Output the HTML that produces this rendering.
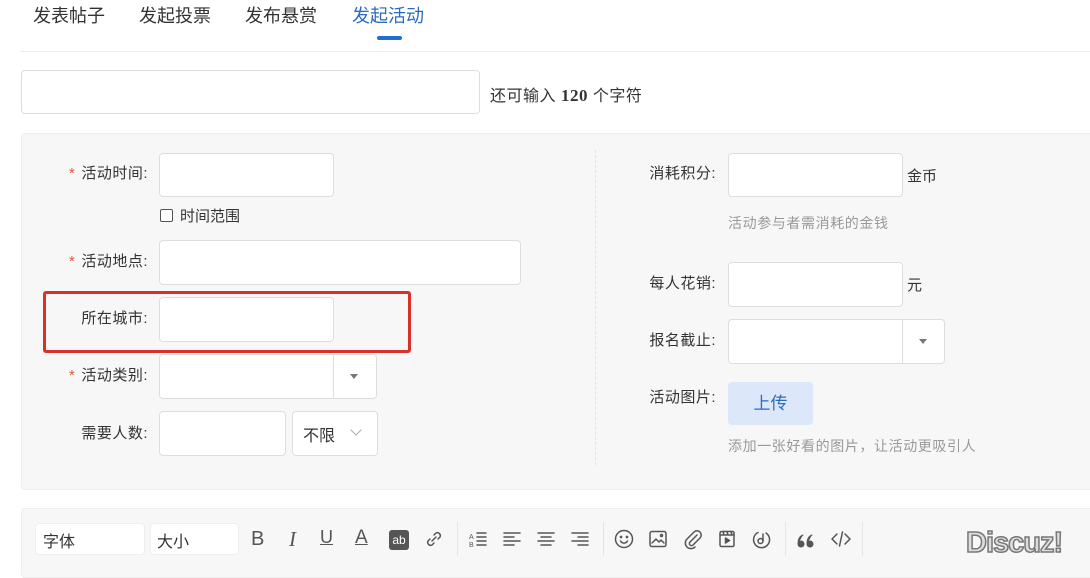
<!DOCTYPE html><html><head><meta charset="utf-8"><style>
*{box-sizing:border-box;margin:0;padding:0}
body{width:1090px;height:572px;overflow:hidden;background:#fff;font-family:"Liberation Sans","Noto Sans CJK SC",sans-serif;color:#333;position:relative}
.a{position:absolute}
.tab{font-size:18px;top:2px;color:#333}
.inp{position:absolute;background:#fff;border:1px solid #ddd;border-radius:4px}
.lb{position:absolute;font-size:15px;color:#333;text-align:right;width:140px;letter-spacing:0.5px}
.lb i{color:#e4573f;font-style:normal;margin-right:6px}
.hint{position:absolute;font-size:14px;color:#999;letter-spacing:0.6px}
svg.i{position:absolute;top:528px;width:22px;height:22px;fill:none;stroke:#555;stroke-width:1.5;stroke-linecap:round;stroke-linejoin:round}
.sep{position:absolute;top:522px;width:1px;height:34px;background:#e5e5e5}
</style></head><body>
<div class="a tab" style="left:33px">发表帖子</div>
<div class="a tab" style="left:139px">发起投票</div>
<div class="a tab" style="left:245px">发布悬赏</div>
<div class="a tab" style="left:352px;color:#2a6bbf">发起活动</div>
<div class="a" style="left:377px;top:36px;width:25px;height:4px;border-radius:2px;background:#1f6fd1"></div>
<div class="a" style="left:20px;top:51px;width:1070px;height:1px;background:#eee"></div>
<div class="inp" style="left:21px;top:70px;width:459px;height:44px"></div>
<div class="a" style="left:490px;top:82px;font-size:16px;letter-spacing:0.5px">还可输入 <b style="font-family:'Liberation Serif';font-size:17px">120</b> 个字符</div>
<div class="a" style="left:21px;top:133px;width:1075px;height:357px;background:#f7f7f7;border:1px solid #eee;border-radius:4px"></div>
<div class="a" style="left:595px;top:150px;height:315px;border-left:1px dashed #e3e3e3"></div>
<div class="lb" style="left:8px;top:162px"><i>*</i>活动时间:</div>
<div class="inp" style="left:159px;top:153px;width:175px;height:44px"></div>
<div class="a" style="left:160px;top:209px;width:13px;height:13px;border:1px solid #555;border-radius:2px;background:#fff"></div>
<div class="a" style="left:180px;top:205px;font-size:15px">时间范围</div>
<div class="lb" style="left:8px;top:250px"><i>*</i>活动地点:</div>
<div class="inp" style="left:159px;top:240px;width:362px;height:45px"></div>
<div class="lb" style="left:8px;top:307px">所在城市:</div>
<div class="inp" style="left:159px;top:297px;width:175px;height:45px"></div>
<div class="a" style="left:43px;top:291px;width:368px;height:62px;border:3px solid #d9302a;border-radius:3px"></div>
<div class="lb" style="left:8px;top:364px"><i>*</i>活动类别:</div>
<div class="inp" style="left:159px;top:354px;width:218px;height:45px"></div>
<div class="a" style="left:333px;top:355px;width:1px;height:43px;background:#ddd"></div>
<div class="a" style="left:350px;top:374px;border:4px solid transparent;border-top:5px solid #777"></div>
<div class="lb" style="left:8px;top:422px">需要人数:</div>
<div class="inp" style="left:159px;top:411px;width:127px;height:45px"></div>
<div class="inp" style="left:292px;top:411px;width:86px;height:45px"></div>
<div class="a" style="left:303px;top:422px;font-size:16px">不限</div>
<div class="a" style="left:352px;top:426px;width:8px;height:8px;border-right:1px solid #aaa;border-bottom:1px solid #aaa;transform:rotate(45deg)"></div>
<div class="lb" style="left:576px;top:162px">消耗积分:</div>
<div class="inp" style="left:728px;top:153px;width:175px;height:44px"></div>
<div class="a" style="left:907px;top:165px;font-size:15px">金币</div>
<div class="hint" style="left:728px;top:213px">活动参与者需消耗的金钱</div>
<div class="lb" style="left:576px;top:272px">每人花销:</div>
<div class="inp" style="left:728px;top:262px;width:175px;height:45px"></div>
<div class="a" style="left:907px;top:274px;font-size:15px">元</div>
<div class="lb" style="left:576px;top:329px">报名截止:</div>
<div class="inp" style="left:728px;top:319px;width:217px;height:45px"></div>
<div class="a" style="left:902px;top:320px;width:1px;height:43px;background:#ddd"></div>
<div class="a" style="left:919px;top:339px;border:4px solid transparent;border-top:5px solid #777"></div>
<div class="lb" style="left:576px;top:386px">活动图片:</div>
<div class="a" style="left:728px;top:382px;width:85px;height:43px;background:#dce8fa;border-radius:4px;color:#2a6bbf;font-size:17px;text-align:center;line-height:43px">上传</div>
<div class="hint" style="left:728px;top:436px">添加一张好看的图片，让活动更吸引人</div>
<div class="a" style="left:21px;top:508px;width:1075px;height:70px;background:#f7f7f7;border:1px solid #eee;border-radius:4px"></div>
<div class="inp" style="left:35px;top:523px;width:110px;height:32px;border-color:#eee;font-size:16px;padding:4px 7px">字体</div>
<div class="inp" style="left:150px;top:523px;width:89px;height:32px;border-color:#eee;font-size:16px;padding:4px 6px">大小</div>
<div class="a" style="left:251px;top:528px;font-size:20px;color:#555">B</div>
<div class="a" style="left:289px;top:527px;font-size:21px;color:#555;font-style:italic;font-family:'Liberation Serif'">I</div>
<div class="a" style="left:320px;top:527px;font-size:18px;color:#555;text-decoration:underline">U</div>
<div class="a" style="left:355px;top:527px;font-size:19px;color:#555;text-decoration:underline">A</div>
<div class="a" style="left:389px;top:530px;width:20px;height:20px;background:#555;border-radius:3px;color:#fff;font-size:12px;text-align:center;line-height:20px">ab</div>
<svg class="i" style="left:423px" viewBox="0 0 22 22"><path d="M9 13l4-4M7 11l-2 2a3 3 0 004 4l2-2M15 11l2-2a3 3 0 00-4-4l-2 2"/></svg>
<div class="sep" style="left:457px"></div>
<svg class="i" style="left:467px" viewBox="0 0 22 22"><path d="M10 5h9M10 9h9M10 13h9M10 17h9"/><text x="2" y="11" font-size="7" fill="#555" stroke="none">A</text><text x="2" y="19" font-size="7" fill="#555" stroke="none">B</text></svg>
<svg class="i" style="left:501px" viewBox="0 0 22 22"><path d="M3 5h16M3 9h10M3 13h16M3 17h10"/></svg>
<svg class="i" style="left:535px" viewBox="0 0 22 22"><path d="M3 5h16M6 9h10M3 13h16M6 17h10"/></svg>
<svg class="i" style="left:569px" viewBox="0 0 22 22"><path d="M3 5h16M9 9h10M3 13h16M9 17h10"/></svg>
<div class="sep" style="left:603px"></div>
<svg class="i" style="left:613px" viewBox="0 0 22 22"><circle cx="11" cy="11" r="8.5"/><path d="M7.5 13a4 4 0 007 0"/><circle cx="8" cy="9" r=".6"/><circle cx="14" cy="9" r=".6"/></svg>
<svg class="i" style="left:647px" viewBox="0 0 22 22"><rect x="3" y="3.5" width="16" height="15" rx="2"/><path d="M5 15l4-4 3 3 2-2 3 3"/><circle cx="14.5" cy="7.5" r="1"/></svg>
<svg class="i" style="left:682px" viewBox="0 0 22 22"><path d="M15 7l-7 7a2 2 0 003 3l7-7a4 4 0 00-6-6L5 11a5.5 5.5 0 008 8"/></svg>
<svg class="i" style="left:716px" viewBox="0 0 22 22"><rect x="4" y="3.5" width="14" height="15" rx="1.5"/><path d="M4 7h14M7 3.5l1 3.5M11 3.5l1 3.5M15 3.5l1 3.5"/><path d="M9.5 10v5l4-2.5z" fill="#555"/></svg>
<svg class="i" style="left:750px" viewBox="0 0 22 22"><path d="M8 4.5A8 8 0 1016 5"/><path d="M13 6v7"/><circle cx="10.5" cy="13" r="2.5"/></svg>
<div class="sep" style="left:785px"></div>
<svg class="i" style="left:795px" viewBox="0 0 22 22"><path d="M3 16a3 3 0 106 0 3 3 0 00-6 0c0-5 2-8 5-9M12 16a3 3 0 106 0 3 3 0 00-6 0c0-5 2-8 5-9" fill="#555" stroke-width="1"/></svg>
<svg class="i" style="left:830px" viewBox="0 0 22 22"><path d="M7 6l-5 5 5 5M15 6l5 5-5 5M12.5 4l-3 14"/></svg>
<div class="sep" style="left:862px"></div>
<div class="a" style="left:966px;top:527px;font-size:29px;font-weight:bold;color:#ddd;-webkit-text-stroke:1.5px #777;letter-spacing:-1px">Discuz!</div>
</body></html>
